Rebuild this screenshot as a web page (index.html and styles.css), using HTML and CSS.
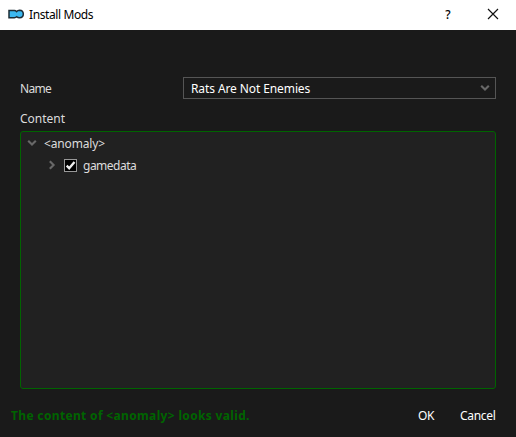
FILE: index.html
```html
<!DOCTYPE html>
<html lang="en">
<head>
<meta charset="utf-8">
<title>Install Mods</title>
<link rel="stylesheet" href="styles.css">
</head>
<body>
<header class="titlebar">
  <svg class="logo" width="17" height="11" viewBox="0 0 17 11"><path d="M1 1.4H6.4Q7.6 1.4 8.6 2.6Q9.6 1.2 11.6 1.2Q15.3 1.4 15.3 5Q15.3 8.6 11.6 8.8Q9.8 8.8 8.7 7.8Q7.8 8.7 6.4 8.7H1Z" fill="#3cb8f0" stroke="#1d2c35" stroke-width="1.5"/></svg>
  <h1 class="title"><span class="t-title">Install Mods</span></h1>
  <span class="help">?</span>
  <svg class="close" width="12" height="12" viewBox="0 0 12 12"><path d="M1 1L11 11M11 1L1 11" stroke="#111" stroke-width="1.15"/></svg>
</header>
<main class="dialog">
  <div class="name-row">
    <label class="t-name">Name</label>
    <div class="combo">
      <span class="t-combo">Rats Are Not Enemies</span>
      <svg class="chevron" width="10" height="8" viewBox="0 0 10 8"><path d="M1.2 1.8L5 5.6L8.8 1.8" /></svg>
    </div>
  </div>
  <div class="content-label"><span class="t-content">Content</span></div>
  <div class="tree">
    <div class="row">
      <svg class="chevron" width="10" height="8" viewBox="0 0 10 8"><path d="M1.2 1.8L5 5.6L8.8 1.8" /></svg>
      <span class="t-root">&lt;anomaly&gt;</span>
    </div>
    <div class="row child">
      <svg class="chevron" width="8" height="10" viewBox="0 0 8 10"><path d="M1.8 1.2L5.6 5L1.8 8.8" /></svg>
      <svg class="check" width="13" height="13" viewBox="0 0 13 13"><rect x=".5" y=".5" width="12" height="12" fill="#000" stroke="#999"/><path d="M2.7 6.6L5.2 9.3L10.5 3" fill="none" stroke="#eee" stroke-width="2.3"/></svg>
      <span class="t-game">gamedata</span>
    </div>
  </div>
</main>
<footer class="footer">
  <span class="status">The content of &lt;anomaly&gt; looks valid.</span>
  <span class="ok">OK</span>
  <span class="cancel">Cancel</span>
</footer>
</body>
</html>
```
FILE: styles.css
```css
* { box-sizing: border-box; }
body {
  margin: 0;
  height: 437px;
  display: flex;
  flex-direction: column;
  overflow: hidden;
  background: #1a1a1a;
  color: #dcdcdc;
  font: 12px/16px "Noto Sans", sans-serif;
  white-space: nowrap;
}
svg { display: block; flex: none; }
.titlebar {
  height: 30px;
  display: flex;
  align-items: center;
  padding: 0 17px 2px 8px;
  background: #fff;
  color: #000;
}
.title { margin: 2px 0 0 4px; flex: 1; font: inherit; }
.t-title { letter-spacing: -0.4px; }
.help { width: 8px; margin: 2px 35px 0 0; text-align: center; font-weight: 500; }
.dialog { padding: 47px 20px 0; }
.name-row { height: 22px; display: flex; align-items: center; }
.t-name { width: 163px; padding-top: 2px; letter-spacing: -0.7px; }
.combo {
  flex: 1;
  height: 22px;
  display: flex;
  align-items: center;
  justify-content: space-between;
  padding: 0 5px 0 7px;
  border: 1px solid #555;
  color: #fff;
}
.t-combo { padding-top: 2px; letter-spacing: -0.1px; }
.chevron path { fill: none; stroke: #686868; stroke-width: 2.1; }
.content-label { height: 32px; padding-top: 12px; }
.tree {
  height: 258px;
  border: 1px solid #006400;
  border-radius: 3px;
  background: #212121;
}
.row { height: 22px; display: flex; align-items: center; padding-left: 6px; }
.t-root { margin-left: 7px; padding-top: 1px; letter-spacing: -0.15px; }
.child { padding-left: 27px; }
.check { margin-left: 8px; margin-top: 1px; }
.t-game { margin-left: 6px; padding-top: 1px; letter-spacing: -0.5px; }
.footer {
  flex: 1;
  display: flex;
  align-items: center;
  padding: 5px 20px 0 11px;
  color: #fff;
}
.status {
  width: 407px;
  color: #006400;
  font-weight: bold;
  letter-spacing: 0.34px;
}
.ok { width: 42px; letter-spacing: -0.3px; }
.cancel { letter-spacing: -0.3px; }
```
